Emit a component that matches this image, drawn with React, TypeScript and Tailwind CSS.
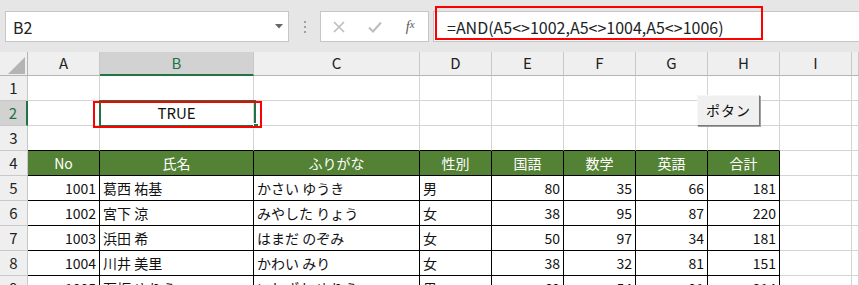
import React from "react";

type Align = "num" | "text" | "center";

const colLetters = ["A", "B", "C", "D", "E", "F", "G", "H", "I", ""];

const headers = ["No", "氏名", "ふりがな", "性別", "国語", "数学", "英語", "合計"];

const students = [
  ["1001", "葛西 祐基", "かさい ゆうき", "男", "80", "35", "66", "181"],
  ["1002", "宮下 涼", "みやした りょう", "女", "38", "95", "87", "220"],
  ["1003", "浜田 希", "はまだ のぞみ", "女", "50", "97", "34", "181"],
  ["1004", "川井 美里", "かわい みり", "女", "38", "32", "81", "151"],
  ["1005", "石坂 ゆりえ", "いしざか ゆりえ", "男", "69", "54", "91", "214"],
];

const aligns: Align[] = ["num", "text", "text", "text", "num", "num", "num", "num"];

function Cell({
  children,
  align = "text",
  table = false,
  tableTop = false,
  head = false,
}: {
  children?: React.ReactNode;
  align?: Align;
  table?: boolean;
  tableTop?: boolean;
  head?: boolean;
}) {
  const alignCls =
    align === "num" ? "justify-end pr-[3px]" : align === "center" ? "justify-center" : "justify-start pl-[3px]";
  const borderCls = table
    ? "border-black"
    : tableTop
      ? "border-r-[#d4d4d4] border-b-black"
      : "border-[#d4d4d4]";
  const bgCls = head ? "bg-[#548235] text-white" : "bg-white text-[#111]";
  return (
    <div
      className={`flex h-[25px] items-center overflow-hidden whitespace-nowrap border-r border-b text-[14px] ${alignCls} ${borderCls} ${bgCls}`}
    >
      {children}
    </div>
  );
}

function RowHead({ n, selected = false }: { n: number; selected?: boolean }) {
  return (
    <div
      className={
        selected
          ? "flex h-[25px] items-center justify-center border-b border-[#c8c8c8] border-r-2 border-r-[#217346] bg-[#d2d2d2] text-[15px] text-[#217346]"
          : "flex h-[25px] items-center justify-center border-r border-b border-[#c8c8c8] bg-[#efefef] text-[15px] text-[#222]"
      }
    >
      {n}
    </div>
  );
}

export default function App() {
  return (
    <div className="relative h-[285px] w-[859px] overflow-hidden bg-white font-['Noto_Sans_CJK_JP','Noto_Sans',sans-serif]">
      {/* formula toolbar */}
      <div className="flex h-[52px] items-start bg-[#e6e6e6] pl-[5px] pt-[11px]">
        <div className="flex h-[31px] w-[284px] items-center justify-between border border-[#c6c6c6] bg-white pl-[7px] pr-[5px] text-[16px] text-[#222]">
          <span>B2</span>
          <svg width="8" height="5" viewBox="0 0 8 5">
            <path d="M0 0 L8 0 L4 4.5 Z" fill="#666" />
          </svg>
        </div>
        <div className="flex h-[31px] w-[31px] flex-col items-center justify-center gap-[3px]">
          <span className="h-[2px] w-[2px] bg-[#a0a0a0]" />
          <span className="h-[2px] w-[2px] bg-[#a0a0a0]" />
          <span className="h-[2px] w-[2px] bg-[#a0a0a0]" />
        </div>
        <div className="flex h-[31px] w-[109px] items-center border border-[#c6c6c6] bg-white">
          <div className="flex w-[36px] justify-center">
            <svg width="12" height="12" viewBox="0 0 12 12">
              <path d="M1 1 L11 11 M11 1 L1 11" stroke="#bdbdbd" strokeWidth="1.6" />
            </svg>
          </div>
          <div className="flex w-[36px] justify-center">
            <svg width="14" height="12" viewBox="0 0 14 12">
              <path d="M1 6.5 L5 10.5 L13 1.5" stroke="#bdbdbd" strokeWidth="2" fill="none" />
            </svg>
          </div>
          <div className="flex w-[36px] justify-center font-['Liberation_Serif',serif] text-[14px] italic text-[#555]">
            f<span className="text-[11px]">x</span>
          </div>
        </div>
        <div className="ml-[4px] flex h-[31px] flex-1 items-center border border-r-0 border-[#c6c6c6] bg-white pl-[13px] text-[16px] text-[#222]">
          =AND(A5&lt;&gt;1002,A5&lt;&gt;1004,A5&lt;&gt;1006)
        </div>
      </div>

      {/* sheet grid */}
      <div className="grid grid-cols-[28px_72px_154px_166px_72px_72px_72px_72px_72px_72px_1fr]">
        <div className="relative h-[24px] border-r border-b border-[#b4b4b4] bg-[#efefef]">
          <svg className="absolute left-[8px] top-[5px]" width="17" height="17" viewBox="0 0 17 17">
            <path d="M17 0 L17 17 L0 17 Z" fill="#b4b4b4" />
          </svg>
        </div>
        {colLetters.map((c, i) =>
          i === 1 ? (
            <div
              key={i}
              className="flex h-[24px] items-center justify-center border-r border-[#c8c8c8] border-b-2 border-b-[#217346] bg-[#d2d2d2] text-[15px] text-[#217346]"
            >
              {c}
            </div>
          ) : (
            <div
              key={i}
              className="flex h-[24px] items-center justify-center border-r border-b border-[#c8c8c8] border-b-[#b4b4b4] bg-[#efefef] text-[15px] text-[#222]"
            >
              {c}
            </div>
          ),
        )}

        {/* row 1 */}
        <RowHead n={1} />
        {colLetters.map((_, i) => (
          <Cell key={i} />
        ))}

        {/* row 2 */}
        <RowHead n={2} selected />
        {colLetters.map((_, i) => (
          <Cell key={i} align="center">
            {i === 1 ? <span className="text-[15px]">TRUE</span> : null}
          </Cell>
        ))}

        {/* row 3 */}
        <RowHead n={3} />
        {colLetters.map((_, i) => (
          <Cell key={i} tableTop={i < 8} />
        ))}

        {/* row 4 header */}
        <RowHead n={4} />
        {colLetters.map((_, i) => (
          <Cell key={i} align="center" table={i < 8} head={i < 8}>
            {headers[i]}
          </Cell>
        ))}

        {students.map((s, r) => (
          <React.Fragment key={r}>
            <RowHead n={r + 5} />
            {colLetters.map((_, i) => (
              <Cell key={i} align={aligns[i]} table={i < 8}>
                {s[i]}
              </Cell>
            ))}
          </React.Fragment>
        ))}
      </div>

      {/* active cell outline */}
      <div className="absolute left-[99px] top-[100px] h-[27px] w-[157px] border-2 border-[#217346]" />
      <div className="absolute left-[253px] top-[123px] h-[6px] w-[6px] border border-white bg-[#217346]" />

      {/* red annotations */}
      <div className="absolute left-[93px] top-[101px] h-[27px] w-[169px] border-2 border-[#ff0000]" />
      <div className="absolute left-[435px] top-[6px] h-[34px] w-[328px] border-2 border-[#ff0000]" />

      {/* form button */}
      <button className="absolute left-[697px] top-[95px] h-[31px] w-[63px] border border-t-[#f8f8f8] border-l-[#f8f8f8] border-r-[#7a7a7a] border-b-[#7a7a7a] bg-[#f0f0f0] text-[14px] tracking-[1px] text-[#111] shadow-[1px_1px_0_#a0a0a0]">
        ポタン
      </button>
    </div>
  );
}
